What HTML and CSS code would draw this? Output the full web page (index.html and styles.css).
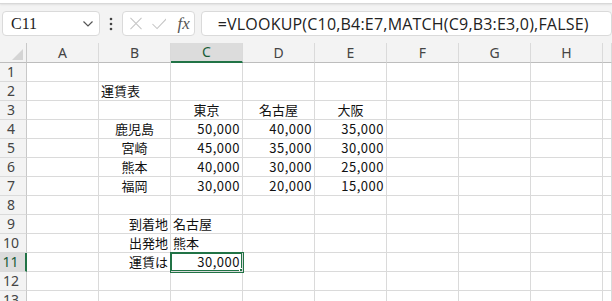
FILE: index.html
```html
<!DOCTYPE html>
<html lang="ja">
<head>
  <meta charset="UTF-8" />
  <title>運賃表</title>
  <link rel="stylesheet" href="styles.css">
</head>
<body>
  <div class="ribbon-edge"></div>

  <div class="formula-bar">
    <div class="name-box">
      <span>C11</span>
      <svg class="chevron" width="10" height="6" viewBox="0 0 10 6"><path d="M0.5 0.5 L5 5 L9.5 0.5" fill="none" stroke="#555" stroke-width="1.2"/></svg>
    </div>
    <div class="more">
      <svg width="4" height="14" viewBox="0 0 4 14"><circle cx="2" cy="2" r="1.3" fill="#444"/><circle cx="2" cy="7" r="1.3" fill="#444"/><circle cx="2" cy="12" r="1.3" fill="#444"/></svg>
    </div>
    <div class="fx-box">
      <svg width="13" height="13" viewBox="0 0 13 13"><path d="M0.5 0.5 L12.5 12.5 M12.5 0.5 L0.5 12.5" stroke="#c4c4c4" stroke-width="1.1"/></svg>
      <svg width="16" height="12" viewBox="0 0 16 12"><path d="M0.5 6 L5.5 11 L15.5 0.5" fill="none" stroke="#c4c4c4" stroke-width="1.1"/></svg>
      <span class="fx">fx</span>
    </div>
    <div class="formula-input">=VLOOKUP(C10,B4:E7,MATCH(C9,B3:E3,0),FALSE)</div>
  </div>

  <table class="sheet">
    <colgroup>
      <col class="col-head">
      <col><col><col><col><col><col><col><col><col class="col-cut">
    </colgroup>
    <tr class="head-row">
      <th class="corner"><span class="corner-mark"></span></th>
      <th>A</th><th>B</th><th class="active">C</th><th>D</th><th>E</th><th>F</th><th>G</th><th>H</th><th></th>
    </tr>
    <tr><th>1</th><td></td><td></td><td></td><td></td><td></td><td></td><td></td><td></td><td></td></tr>
    <tr><th>2</th><td></td><td>運賃表</td><td></td><td></td><td></td><td></td><td></td><td></td><td></td></tr>
    <tr><th>3</th><td></td><td></td><td class="mid">東京</td><td class="mid">名古屋</td><td class="mid">大阪</td><td></td><td></td><td></td><td></td></tr>
    <tr><th>4</th><td></td><td class="mid">鹿児島</td><td class="num">50,000</td><td class="num">40,000</td><td class="num">35,000</td><td></td><td></td><td></td><td></td></tr>
    <tr><th>5</th><td></td><td class="mid">宮崎</td><td class="num">45,000</td><td class="num">35,000</td><td class="num">30,000</td><td></td><td></td><td></td><td></td></tr>
    <tr><th>6</th><td></td><td class="mid">熊本</td><td class="num">40,000</td><td class="num">30,000</td><td class="num">25,000</td><td></td><td></td><td></td><td></td></tr>
    <tr><th>7</th><td></td><td class="mid">福岡</td><td class="num">30,000</td><td class="num">20,000</td><td class="num">15,000</td><td></td><td></td><td></td><td></td></tr>
    <tr><th>8</th><td></td><td></td><td></td><td></td><td></td><td></td><td></td><td></td><td></td></tr>
    <tr><th>9</th><td></td><td class="label">到着地</td><td>名古屋</td><td></td><td></td><td></td><td></td><td></td><td></td></tr>
    <tr><th>10</th><td></td><td class="label">出発地</td><td>熊本</td><td></td><td></td><td></td><td></td><td></td><td></td></tr>
    <tr><th class="active">11</th><td></td><td class="label">運賃は</td><td class="num selected">30,000<span class="fill-handle"></span></td><td></td><td></td><td></td><td></td><td></td><td></td></tr>
    <tr><th>12</th><td></td><td></td><td></td><td></td><td></td><td></td><td></td><td></td><td></td></tr>
    <tr><th>13</th><td></td><td></td><td></td><td></td><td></td><td></td><td></td><td></td><td></td></tr>
  </table>
</body>
</html>
```

FILE: styles.css
```css
html, body {
  margin: 0;
  padding: 0;
  overflow: hidden;
  background: #f3f3f3;
}

body {
  width: 612px;
  height: 301px;
  font-family: "Noto Sans CJK JP", sans-serif;
}

.ribbon-edge {
  height: 3px;
  background: #ffffff;
  border-bottom: 1px solid #d8d8d8;
  box-shadow: 0 1px 2px rgba(0, 0, 0, 0.08);
}

.formula-bar {
  display: flex;
  align-items: center;
  height: 25px;
  padding: 7px 0 7px 2px;
}

.name-box,
.fx-box,
.formula-input {
  box-sizing: border-box;
  height: 25px;
  background: #ffffff;
  border: 1px solid #dadada;
  border-radius: 4px;
  display: flex;
  align-items: center;
}

.name-box {
  width: 100px;
  padding: 0 6px 0 8px;
  justify-content: space-between;
  font-family: "Liberation Serif", serif;
  font-size: 16px;
  color: #222;
}

.more {
  width: 22px;
  display: flex;
  justify-content: center;
  align-items: center;
}

.fx-box {
  width: 73px;
  padding: 0 4px 0 7px;
  gap: 10px;
}

.fx {
  font-family: "Liberation Serif", serif;
  font-style: italic;
  font-size: 17px;
  color: #555;
  margin-left: 1px;
}

.formula-input {
  margin-left: 6px;
  width: 420px;
  padding-left: 16px;
  font-family: "Open Sans", sans-serif;
  font-size: 16px;
  letter-spacing: 0.2px;
  color: #222;
  white-space: nowrap;
}

.sheet {
  table-layout: fixed;
  border-collapse: separate;
  border-spacing: 0;
  width: 612px;
  background: #ffffff;
}

.sheet col {
  width: 72px;
}

.sheet col.col-head {
  width: 27px;
}

.sheet col.col-cut {
  width: 9px;
}

.sheet th,
.sheet td {
  box-sizing: border-box;
  height: 19px;
  padding: 0 2px;
  border-right: 1px solid #dadada;
  border-bottom: 1px solid #dadada;
  font-weight: normal;
  font-size: 13px;
  line-height: 18px;
  color: #111;
  white-space: nowrap;
  overflow: hidden;
}

.sheet th {
  background: #f3f3f3;
  color: #444;
  font-family: "Noto Sans", sans-serif;
  font-size: 14px;
  text-align: center;
  padding: 0 4px 0 0;
}

.head-row th {
  border-bottom: 1px solid #bdbdbd;
  padding: 0;
}

.sheet tr th:first-child {
  border-right: 1px solid #c8c8c8;
}

.corner {
  vertical-align: bottom;
}

.corner-mark {
  display: block;
  width: 11px;
  height: 11px;
  margin: 0 3px 2px auto;
  background: #d4d4d4;
  clip-path: polygon(100% 0, 100% 100%, 0 100%);
}

.sheet th.active {
  background: #dcdcdc;
  color: #185c37;
}

.head-row th.active {
  border-bottom: 2px solid #217346;
}

.sheet tr th.active:first-child {
  border-right: 2px solid #217346;
}

.mid {
  text-align: center;
}

.num,
.label {
  text-align: right;
}

.num {
  letter-spacing: 0.5px;
  padding-right: 2px;
}

.selected {
  position: relative;
  overflow: visible;
  box-shadow: 0 0 0 1px #217346, inset 0 0 0 1px #217346;
}

.fill-handle {
  position: absolute;
  right: -4px;
  bottom: -4px;
  width: 5px;
  height: 5px;
  background: #217346;
  border: 1px solid #ffffff;
}
```
